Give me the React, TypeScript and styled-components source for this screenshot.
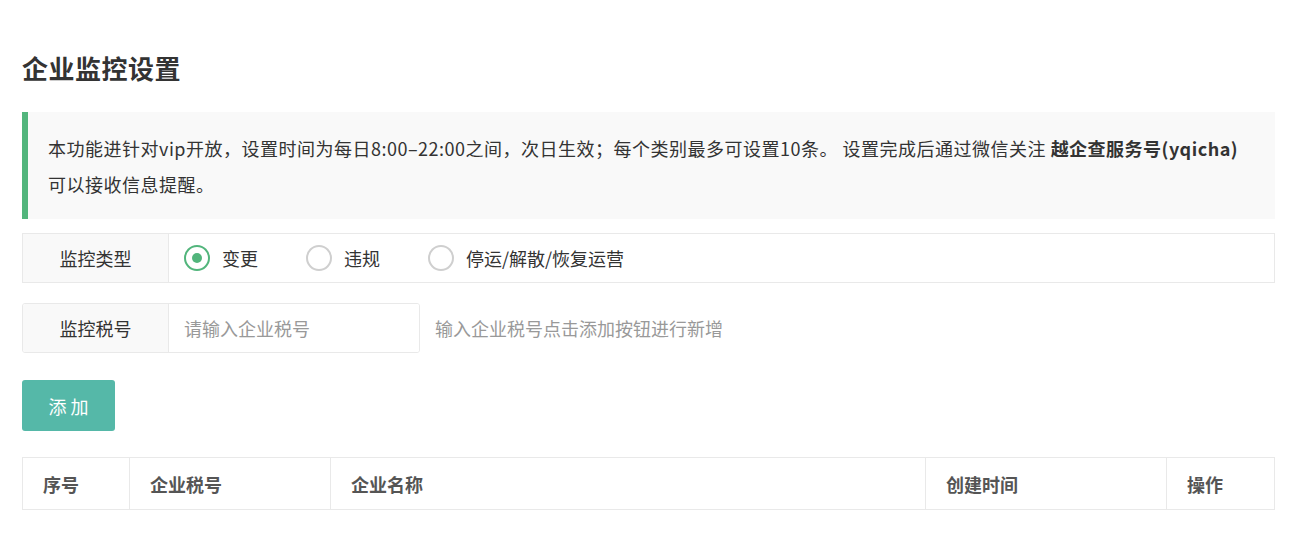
import * as React from "react";
import styled, {createGlobalStyle} from "styled-components";

const GlobalStyle = createGlobalStyle`
    body {
        margin: 0;
        background: #fff;
        font-family: "PingFang SC", "Noto Sans CJK SC", "Noto Sans", sans-serif;
        color: #333;
    }
`;

const GREEN = "#52b57c";
const LINE = "#e9e9e9";

const Page = styled.div`
    padding: 50px 21px 30px 22px;
`;

const Title = styled.h1`
    margin: 0 0 26px;
    font-size: 26px;
    line-height: 36px;
    font-weight: 700;
    letter-spacing: 0.5px;
    color: #333;
`;

const Notice = styled.div`
    background: #f9f9f9;
    border-left: 6px solid ${GREEN};
    padding: 18px 24px 17px 20px;
    font-size: 18px;
    line-height: 36px;
    letter-spacing: 0.5px;
    color: #333;

    b {
        font-weight: 700;
    }
`;

const TypeRow = styled.div`
    display: flex;
    height: 50px;
    margin-top: 14px;
    border: 1px solid ${LINE};
    box-sizing: border-box;
`;

const Label = styled.div`
    width: 145px;
    flex-shrink: 0;
    display: flex;
    align-items: center;
    justify-content: center;
    background: #f9f9f9;
    border-right: 1px solid ${LINE};
    font-size: 18px;
    color: #333;
`;

const RadioGroup = styled.div`
    display: flex;
    align-items: center;
    padding-left: 15px;
    gap: 48px;
`;

const RadioItem = styled.label`
    display: flex;
    align-items: center;
    gap: 12px;
    font-size: 18px;
    color: #333;
    cursor: pointer;
`;

const Circle = styled.span<{ $checked: boolean }>`
    width: 26px;
    height: 26px;
    box-sizing: border-box;
    border-radius: 50%;
    border: 2px solid ${p => (p.$checked ? GREEN : "#cfcfcf")};
    display: flex;
    align-items: center;
    justify-content: center;

    &::after {
        content: "";
        width: 10px;
        height: 10px;
        border-radius: 50%;
        background: ${GREEN};
        display: ${p => (p.$checked ? "block" : "none")};
    }
`;

const TaxRow = styled.div`
    display: flex;
    align-items: center;
    margin-top: 20px;
`;

const InputGroup = styled.div`
    display: flex;
    width: 398px;
    height: 50px;
    box-sizing: border-box;
    border: 1px solid ${LINE};
    border-radius: 3px;
    overflow: hidden;
`;

const TaxInput = styled.input`
    flex: 1;
    min-width: 0;
    border: none;
    outline: none;
    padding: 0 15px;
    font-family: inherit;
    font-size: 18px;
    color: #333;
    background: #fff;

    &::placeholder {
        color: #999;
    }
`;

const Hint = styled.span`
    margin-left: 15px;
    font-size: 18px;
    color: #999;
`;

const AddButton = styled.button`
    display: block;
    margin-top: 27px;
    width: 93px;
    height: 51px;
    border: none;
    border-radius: 3px;
    background: #55b8a8;
    color: #fff;
    font-family: inherit;
    font-size: 18px;
    letter-spacing: 4px;
    text-indent: 4px;
    cursor: pointer;
`;

const Table = styled.table`
    margin-top: 26px;
    width: 100%;
    border-collapse: collapse;
    table-layout: fixed;
`;

const HeadCell = styled.th<{ $width?: number }>`
    width: ${p => (p.$width ? p.$width + "px" : "auto")};
    height: 52px;
    box-sizing: border-box;
    padding: 0 20px;
    border: 1px solid ${LINE};
    text-align: left;
    font-size: 18px;
    font-weight: 700;
    color: #555;
`;

const types = ["变更", "违规", "停运/解散/恢复运营"];

const columns: { name: string; width?: number }[] = [
    {name: "序号", width: 107},
    {name: "企业税号", width: 201},
    {name: "企业名称"},
    {name: "创建时间", width: 241},
    {name: "操作", width: 108},
];

export default function App() {
    const [type, setType] = React.useState(0);
    const [tax, setTax] = React.useState("");

    return (
        <Page>
            <GlobalStyle/>
            <Title>企业监控设置</Title>
            <Notice>
                本功能进针对vip开放，设置时间为每日8:00–22:00之间，次日生效；每个类别最多可设置10条。 设置完成后通过微信关注 <b>越企查服务号(yqicha)</b> 可以接收信息提醒。
            </Notice>
            <TypeRow>
                <Label>监控类型</Label>
                <RadioGroup>
                    {types.map((t, i) => (
                        <RadioItem key={t} onClick={() => setType(i)}>
                            <Circle $checked={type === i}/>
                            {t}
                        </RadioItem>
                    ))}
                </RadioGroup>
            </TypeRow>
            <TaxRow>
                <InputGroup>
                    <Label>监控税号</Label>
                    <TaxInput
                        placeholder="请输入企业税号"
                        value={tax}
                        onChange={e => setTax(e.target.value)}
                    />
                </InputGroup>
                <Hint>输入企业税号点击添加按钮进行新增</Hint>
            </TaxRow>
            <AddButton>添加</AddButton>
            <Table>
                <thead>
                <tr>
                    {columns.map(c => (
                        <HeadCell key={c.name} $width={c.width}>{c.name}</HeadCell>
                    ))}
                </tr>
                </thead>
            </Table>
        </Page>
    );
}
